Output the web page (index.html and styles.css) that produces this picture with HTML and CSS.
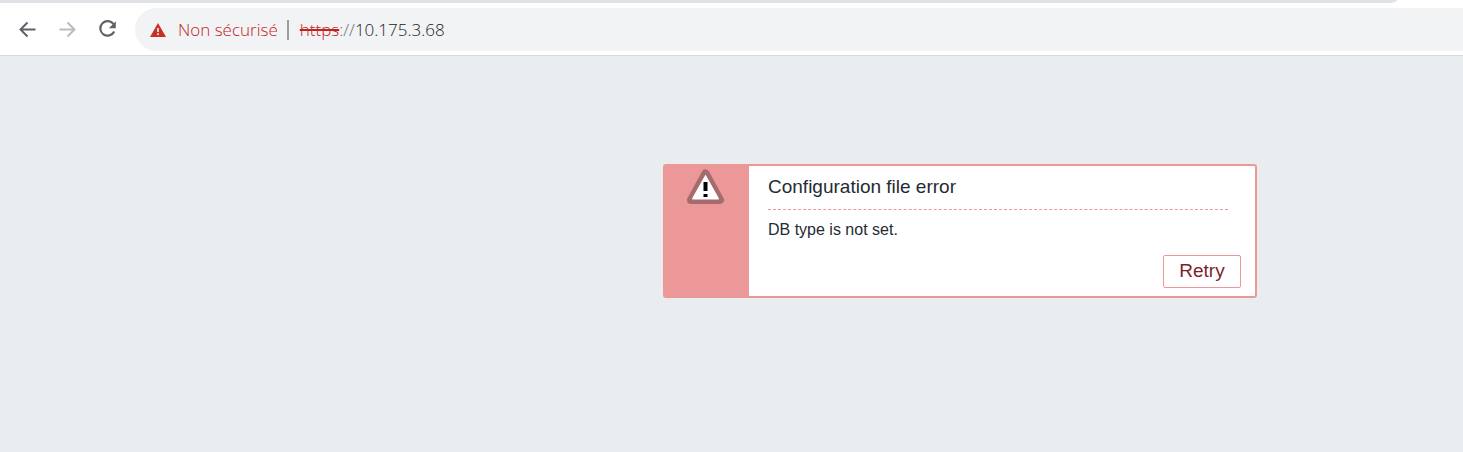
FILE: index.html
```html
<!DOCTYPE html>
<html lang="en">
<head>
<meta charset="utf-8">
<title>Configuration file error</title>
<link rel="stylesheet" href="styles.css">
</head>
<body>
<header class="browser">
  <div class="tabstrip"></div>
  <nav class="toolbar">
    <button class="nav-button" type="button" aria-label="Back">
      <svg width="24" height="24" viewBox="0 0 24 24"><path d="M20.500 11.500H5.500M12.500 4.500L5.500 11.500L12.500 18.500" fill="none" stroke="#5f6368" stroke-width="2"/></svg>
    </button>
    <button class="nav-button" type="button" aria-label="Forward" disabled>
      <svg width="24" height="24" viewBox="0 0 24 24"><path d="M4.500 11.500H19.500M12.500 4.500L19.500 11.500L12.500 18.500" fill="none" stroke="#babcbe" stroke-width="2"/></svg>
    </button>
    <button class="nav-button" type="button" aria-label="Reload">
      <svg width="24" height="24" viewBox="0 0 24 24"><path d="M18.600 6.200A7.300 7.300 0 1 0 19.200 13.500" fill="none" stroke="#5f6368" stroke-width="2.200"/><path d="M20.800 3.200v7h-7z" fill="#5f6368"/></svg>
    </button>
    <div class="address">
      <svg class="address-icon" width="16" height="14" viewBox="0 0 16 14"><path d="M8 0L16 14H0z" fill="#c93025"/><path d="M7.200 5h1.600v4H7.200zM7.200 10.300h1.600v1.700H7.200z" fill="#f1f3f4"/></svg>
      <span class="address-status">Non sécurisé</span>
      <span class="address-divider"></span>
      <span class="address-url"><s class="scheme">https</s><span class="slashes">://</span>10.175.3.68</span>
    </div>
  </nav>
</header>
<main class="page">
  <section class="message">
    <div class="message-side">
      <svg width="38" height="36" viewBox="0 0 38 36"><path d="M18.500 4.500L33 31H4z" fill="#a66b6c" stroke="#a66b6c" stroke-width="8" stroke-linejoin="round"/><path d="M18.500 5.500L31.700 29Q32.500 30.500 31 30.500H6Q4.500 30.500 5.300 29z" fill="#fff"/><path d="M16.500 13h4v9h-4zM16.500 25h4v3h-4z" fill="#000"/></svg>
    </div>
    <div class="message-main">
      <h1 class="message-title">Configuration file error</h1>
      <p class="message-text">DB type is not set.</p>
      <div class="message-actions"><button class="retry" type="button">Retry</button></div>
    </div>
  </section>
</main>
</body>
</html>
```
FILE: styles.css
```css
* { box-sizing: border-box; }

body {
  margin: 0;
  min-height: 100vh;
  background: #e9edf0;
  color: #1f2c33;
  font-family: "Liberation Sans", Arial, sans-serif;
}

.browser {
  background: #fff;
  border-bottom: 1px solid #d6d9db;
}

.tabstrip {
  height: 3px;
  margin-right: 66px;
  background: #dee1e6;
  border-bottom-right-radius: 8px 3px;
}

.toolbar {
  display: flex;
  align-items: center;
  gap: 16px;
  padding: 5px 0 4px 15px;
}

.nav-button {
  display: flex;
  padding: 0;
  border: 0;
  background: none;
}

.address {
  display: flex;
  flex: 1;
  align-items: center;
  height: 43px;
  padding-left: 15px;
  border-radius: 22px 0 0 22px;
  background: #f1f3f4;
  color: #202124;
  font: 300 17px/24px "Open Sans", "Noto Sans", sans-serif;
}

.address-status {
  margin-left: 12px;
  color: #c5221f;
}

.address-divider {
  width: 2px;
  height: 20px;
  margin: 0 11px 0 9px;
  background: #9a9c9f;
}

.scheme {
  color: #c5221f;
  text-decoration-thickness: 2px;
}

.slashes { color: #6b6e72; }

.page {
  display: flex;
  justify-content: flex-end;
  padding: 108px 206px 0 16px;
}

.message {
  display: flex;
  width: 594px;
  border: 2px solid #ec9898;
  border-radius: 3px;
  background: #fff;
}

.message-side {
  display: flex;
  flex: 0 0 84px;
  justify-content: center;
  align-items: flex-start;
  padding: 3px 2px 0 0;
  background: #ec9898;
}

.message-main {
  flex: 1;
  padding: 9px 14px 8px 19px;
}

.message-title {
  margin: 0 13px 10px 0;
  padding-bottom: 11px;
  border-bottom: 1px dashed #ec9898;
  font-size: 19px;
  font-weight: 400;
  line-height: 23px;
}

.message-text {
  margin: 0 0 15px;
  font-size: 16px;
  line-height: 20px;
}

.message-actions {
  display: flex;
  justify-content: flex-end;
}

.retry {
  width: 78px;
  height: 33px;
  padding: 0 0 2px;
  border: 1px solid #ec9898;
  border-radius: 2px;
  background: #fff;
  color: #7d1f2b;
  font: 19px/29px "Liberation Sans", Arial, sans-serif;
}
```
